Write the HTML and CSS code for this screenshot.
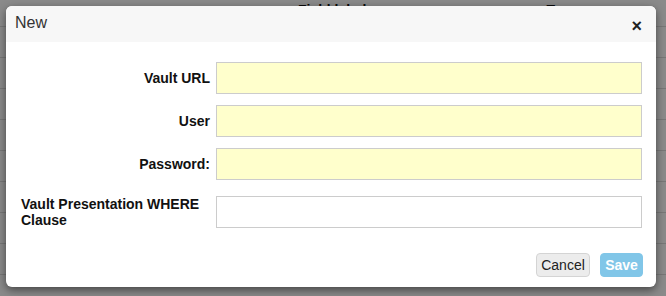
FILE: index.html
```html
<!DOCTYPE html>
<html lang="en">
<head>
  <meta charset="UTF-8" />
  <title>New</title>
  <link rel="stylesheet" href="styles.css">
</head>
<body>
  <div class="page">
    <div class="page-head">
      <span class="col-field">Field label</span>
      <span class="col-type">Type</span>
    </div>
    <div class="page-row"></div>
    <div class="page-row"></div>
    <div class="page-row"></div>
    <div class="page-row"></div>
    <div class="page-row"></div>
    <div class="page-row"></div>
    <div class="page-row"></div>
    <div class="page-row"></div>
  </div>

  <div class="backdrop"></div>

  <div class="modal">
    <div class="modal-header">
      <h4>New</h4>
      <button class="close" type="button">&times;</button>
    </div>
    <form class="modal-body">
      <div class="row">
        <label for="vault-url">Vault URL</label>
        <input type="text" id="vault-url" class="req" />
      </div>
      <div class="row">
        <label for="user">User</label>
        <input type="text" id="user" class="req" />
      </div>
      <div class="row">
        <label for="password">Password:</label>
        <input type="password" id="password" class="req" />
      </div>
      <div class="row row-wide">
        <label for="where" class="left">Vault Presentation WHERE Clause</label>
        <input type="text" id="where" />
      </div>
    </form>
    <div class="modal-footer">
      <button type="button" class="btn btn-cancel">Cancel</button>
      <button type="button" class="btn btn-save">Save</button>
    </div>
  </div>
</body>
</html>
```

FILE: styles.css
```css
body {
  margin: 0;
  width: 666px;
  height: 296px;
  overflow: hidden;
  background-color: #fff;
  font-family: 'Liberation Sans', Arial, Helvetica, sans-serif;
  color: #333;
  position: relative;
}
.page {
  padding-top: 2px;
}
.page-head {
  display: flex;
  height: 24px;
  font-size: 14px;
  font-weight: bold;
  color: #111;
  border-bottom: 1px solid #ddd;
}
.col-field { margin-left: 298px; }
.col-type { margin-left: 180px; }
.page-row {
  height: 30px;
  border-bottom: 1px solid #ddd;
}
.backdrop {
  position: absolute;
  inset: 0;
  background-color: rgba(0,0,0,0.46);
}
.modal {
  position: absolute;
  left: 6px;
  top: 6px;
  width: 650px;
  height: 281px;
  background-color: #fff;
  border-radius: 6px;
  box-shadow: 0 3px 9px rgba(0,0,0,0.5);
  display: flex;
  flex-direction: column;
  overflow: hidden;
}
.modal-header {
  height: 36px;
  background-color: #f7f7f7;
  display: flex;
  align-items: center;
  justify-content: space-between;
  padding: 0 14px 0 9px;
}
.modal-header h4 {
  margin: 0;
  font-size: 16px;
  font-weight: normal;
  color: #333;
  margin-top: -2px;
}
.close {
  border: none;
  background: none;
  padding: 0;
  font-family: 'Liberation Sans', Arial, sans-serif;
  font-size: 18px;
  font-weight: bold;
  color: #222;
  line-height: 1;
  margin-top: 4px;
}
.modal-body {
  padding: 20px 14px 0 15px;
  display: flex;
  flex-direction: column;
  gap: 11px;
}
.row {
  display: flex;
  align-items: center;
  gap: 6px;
}
.row label {
  width: 189px;
  text-align: right;
  font-size: 14px;
  font-weight: bold;
  color: #111;
}
.row label.left {
  text-align: left;
  line-height: 16px;
}
.row-wide {
  margin-top: 5px;
  align-items: flex-start;
}
.row input {
  width: 426px;
  height: 32px;
  box-sizing: border-box;
  border: 1px solid #ccc;
  background-color: #fff;
  font-size: 14px;
  padding: 4px 8px;
  margin: 0;
  outline: none;
}
.row input.req {
  background-color: #ffffcc;
}
.modal-footer {
  margin-top: auto;
  display: flex;
  justify-content: flex-end;
  gap: 10px;
  padding: 0 13px 10px 0;
}
.btn {
  height: 24px;
  border-radius: 4px;
  font-family: 'Liberation Sans', Arial, sans-serif;
  font-size: 14px;
  padding: 0;
  text-align: center;
  cursor: pointer;
}
.btn-cancel {
  background-color: #ececec;
  border: 1px solid #d4d4d4;
  color: #222;
  width: 54px;
}
.btn-save {
  background-color: #81c6e8;
  border: 1px solid #81c6e8;
  color: #fff;
  font-weight: bold;
  width: 43px;
}
```
